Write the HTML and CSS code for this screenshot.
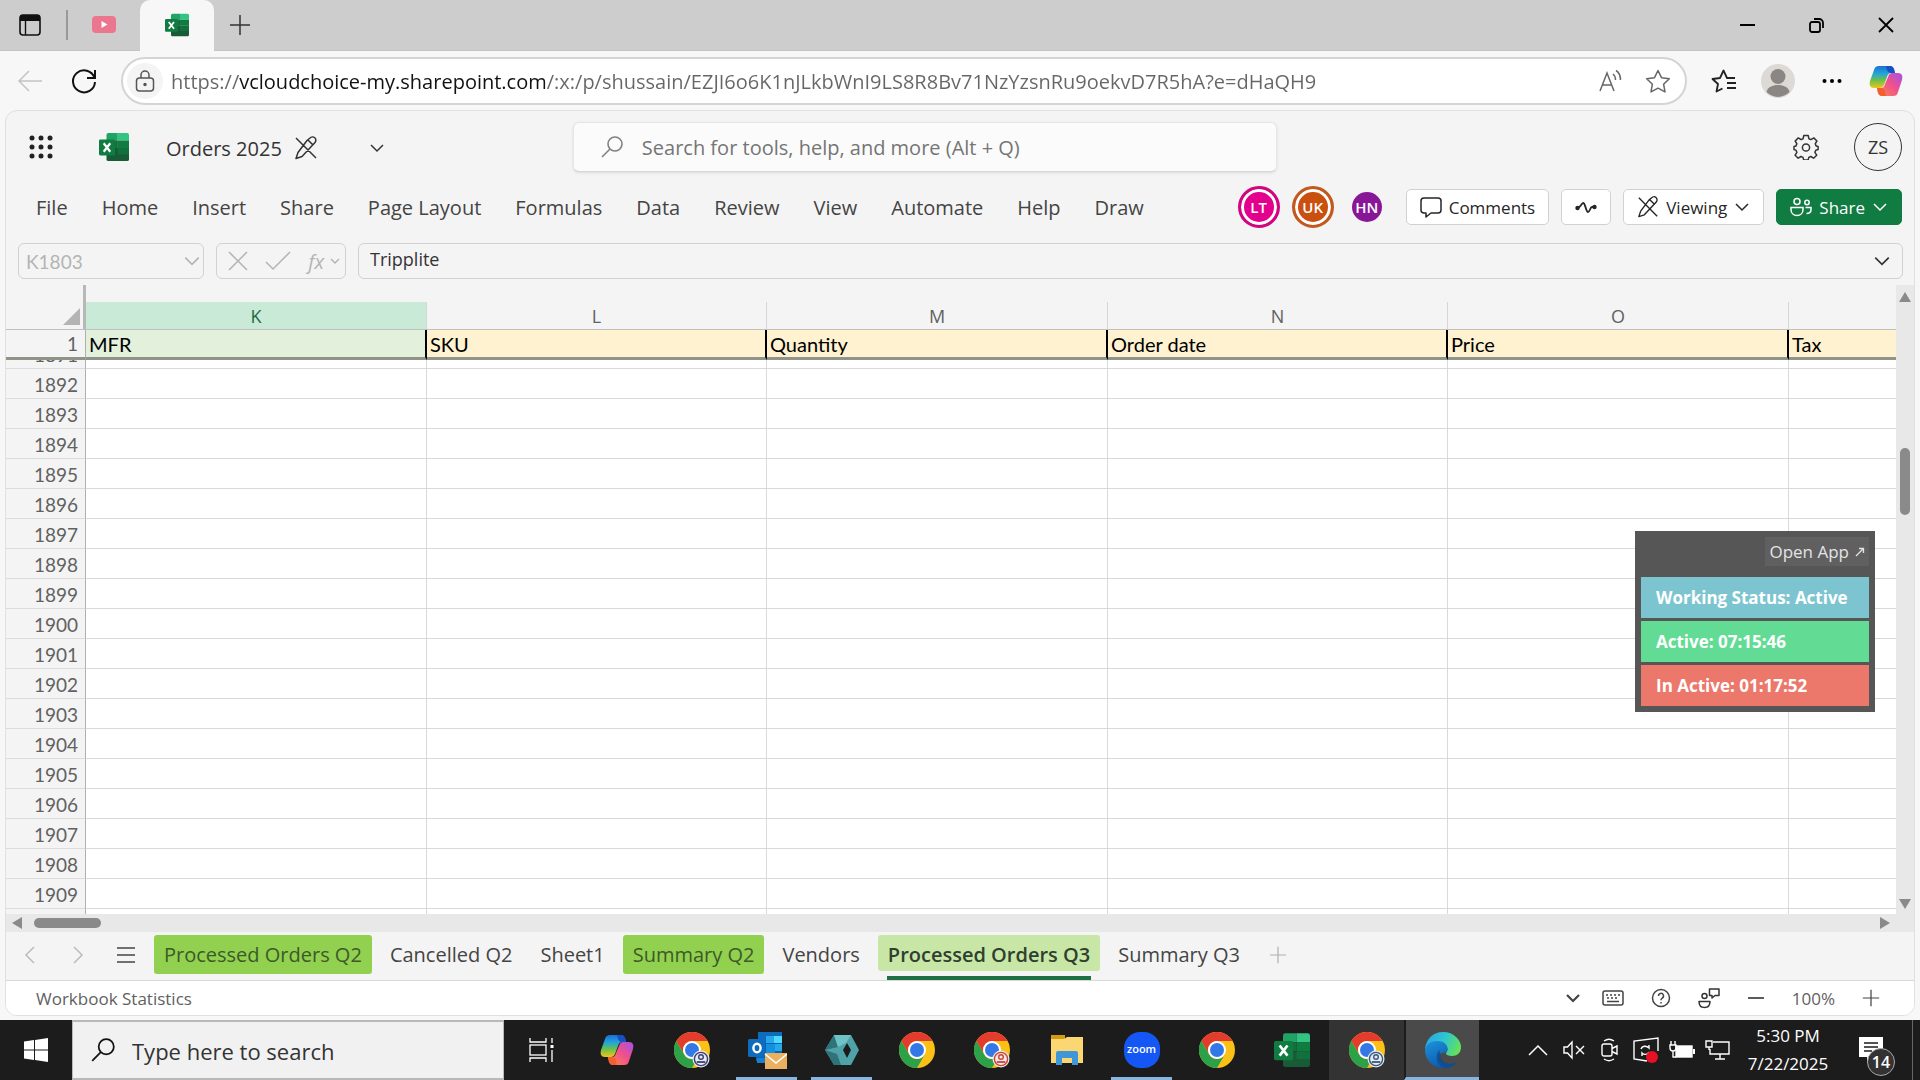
FILE: index.html
```html
<!DOCTYPE html>
<html lang="en">
  <head>
    <meta charset="UTF-8" />
    <meta name="viewport" content="width=device-width, initial-scale=1.0" />
    <title>Orders 2025</title>
    <link rel="stylesheet" href="styles.css" />
  </head>
  <body>
    <!-- Shared icons -->
    <svg class="defs" aria-hidden="true">
      <defs>
        <linearGradient id="cpTop" x1="0" y1="0" x2="0" y2="1">
          <stop offset="0" stop-color="#1b6fd8" />
          <stop offset="0.35" stop-color="#22a6d8" />
          <stop offset="0.65" stop-color="#6cc04a" />
          <stop offset="1" stop-color="#f2c51b" />
        </linearGradient>
        <linearGradient id="cpBottom" x1="1" y1="0" x2="0" y2="1">
          <stop offset="0" stop-color="#a352e8" />
          <stop offset="0.45" stop-color="#ee4f8f" />
          <stop offset="1" stop-color="#ff8a4a" />
        </linearGradient>
        <linearGradient id="edgeTop" x1="0" y1="0.3" x2="1" y2="0.6">
          <stop offset="0" stop-color="#2aa6e0" />
          <stop offset="0.5" stop-color="#2fc6d0" />
          <stop offset="1" stop-color="#66e254" />
        </linearGradient>
        <linearGradient id="edgeBody" x1="0" y1="0" x2="0.6" y2="1">
          <stop offset="0" stop-color="#1d93dd" />
          <stop offset="1" stop-color="#0c56a8" />
        </linearGradient>
        <symbol id="excel" viewBox="0 0 32 32">
          <path fill="#21a366" d="M10 1h10v8H8V3a2 2 0 0 1 2-2z" />
          <path fill="#33c481" d="M20 1h10a2 2 0 0 1 2 2v6H20z" />
          <path fill="#107c41" d="M20 9h12v8H20z" />
          <path fill="#185c37" d="M8 9h12v8H8z" />
          <path fill="#107c41" d="M8 9h12v8H8z" opacity=".6" />
          <path fill="#185c37" d="M8 17h24v12a2 2 0 0 1-2 2H10a2 2 0 0 1-2-2z" />
          <path fill="#107c41" d="M20 17h12v7H20z" opacity=".6" />
          <rect x="0" y="8" width="17" height="17" rx="1.5" fill="#107c41" />
          <path stroke="#fff" stroke-width="2.4" fill="none" d="M5 12l7 9M12 12l-7 9" />
        </symbol>
        <symbol id="chrome" viewBox="0 0 36 36">
          <circle cx="18" cy="18" r="18" fill="#fbc116" />
          <path fill="#e33b2e" d="M2.4 9A18 18 0 0 1 33.6 9H18a9 9 0 0 0-7.8 13.5z" />
          <path fill="#2da04a" d="M2.4 9l7.8 13.5A9 9 0 0 0 25.8 22.5L18 36A18 18 0 0 1 2.4 9z" />
          <circle cx="18" cy="18" r="9" fill="#fff" />
          <circle cx="18" cy="18" r="7" fill="#3478e8" />
        </symbol>
        <symbol id="badge" viewBox="0 0 18 18">
          <circle cx="9" cy="9" r="8.5" fill="#e8eaf0" />
          <circle cx="9" cy="9" r="6.6" fill="none" stroke="currentColor" stroke-width="1.4" />
          <circle cx="9" cy="7" r="2.3" fill="none" stroke="currentColor" stroke-width="1.4" />
          <path d="M4.8 12h8.4" stroke="currentColor" stroke-width="1.8" />
        </symbol>
        <symbol id="copilot" viewBox="0 0 34 32">
          <path fill="url(#cpTop)" d="M10 1h11c2 0 3 1 4 3l1 4h-4c-2 0-3 1-4 4l-3 8c-1 2-2 3-4 3H5c-4 0-5-3-4-7l4-11c1-3 2-4 5-4z" />
          <path fill="#1750c4" d="M17 1h4c2 0 3 1 4 3l1 4h-4c-2 0-3-1-4-3z" />
          <path fill="url(#cpBottom)" d="M24 31H13c-2 0-3-1-4-3l-1-5h4c2 0 3-1 4-4l3-7c1-3 2-4 4-4h6c4 0 5 3 4 7l-4 12c-1 3-2 4-5 4z" />
          <path fill="#f3602f" d="M17 31h-4c-2 0-3-1-4-3l-1-5h4c2 0 3 1 4 3z" />
        </symbol>
        <symbol id="chevron" viewBox="0 0 16 16">
          <path d="M2 5l6 6 6-6" fill="none" stroke="currentColor" stroke-width="1.5" />
        </symbol>
        <symbol id="search" viewBox="0 0 24 24">
          <circle cx="15" cy="9" r="7" fill="none" stroke="currentColor" stroke-width="1.6" />
          <path d="M10 14l-8 8" stroke="currentColor" stroke-width="1.6" />
        </symbol>
        <symbol id="pencil-off" viewBox="0 0 24 24">
          <path d="M13 4.500l3-2.500a3 3 0 0 1 5 4.500L8 20.500 2 22.500l2-6L13 4.500zM14 4l5 5M2 2l20 20" fill="none" stroke="currentColor" stroke-width="1.5" stroke-linejoin="round" />
        </symbol>
        <symbol id="plus" viewBox="0 0 22 22">
          <path d="M11 1v20M1 11h20" stroke="currentColor" stroke-width="1.5" />
        </symbol>
      </defs>
    </svg>

    <header class="tab-strip">
      <button class="strip-btn" aria-label="Tab actions">
        <svg width="22" height="22" viewBox="0 0 22 22">
          <rect x="1" y="1" width="20" height="20" rx="3" fill="none" stroke="#111" stroke-width="1.6" />
          <path d="M1 4a3 3 0 0 1 3-3h14a3 3 0 0 1 3 3v3H1z" fill="#111" />
          <path d="M6.500 7v14" stroke="#111" stroke-width="1.4" />
        </svg>
      </button>
      <span class="strip-divider"></span>
      <button class="tab" aria-label="YouTube">
        <svg width="24" height="18" viewBox="0 0 24 18">
          <rect width="24" height="17" rx="4" fill="#ea7690" />
          <path d="M9.500 5v7l6-3.500z" fill="#fff" />
        </svg>
      </button>
      <button class="tab tab-active" aria-label="Orders 2025">
        <svg width="24" height="24"><use href="#excel" /></svg>
      </button>
      <button class="strip-btn new-tab" aria-label="New tab">
        <svg width="22" height="22"><use href="#plus" /></svg>
      </button>
      <div class="window-controls">
        <button aria-label="Minimize">
          <svg width="16" height="16" viewBox="0 0 16 16"><path d="M0 8h15" stroke="#000" stroke-width="2" /></svg>
        </button>
        <button aria-label="Restore">
          <svg width="16" height="16" viewBox="0 0 16 16" fill="none" stroke="#000" stroke-width="1.800">
            <rect x="1" y="5" width="10" height="10" rx="2" />
            <path d="M5 2h5a4 4 0 0 1 4 4v5" />
          </svg>
        </button>
        <button aria-label="Close">
          <svg width="16" height="16" viewBox="0 0 16 16"><path d="M1 1l14 14M15 1L1 15" stroke="#000" stroke-width="1.800" /></svg>
        </button>
      </div>
    </header>

    <nav class="toolbar">
      <button class="tool-btn" aria-label="Back" disabled>
        <svg width="26" height="22" viewBox="0 0 26 22"><path d="M25 11H2M12 1L2 11l10 10" fill="none" stroke="#c4c4c4" stroke-width="1.500" /></svg>
      </button>
      <button class="tool-btn" aria-label="Refresh">
        <svg width="26" height="26" viewBox="0 0 26 26" fill="none" stroke="#111" stroke-width="2">
          <path d="M23.500 10A11 11 0 1 0 24 14" />
          <path d="M24 2v8h-8" />
        </svg>
      </button>
      <div class="address">
        <button class="site-info" aria-label="Site information">
          <svg width="20" height="22" viewBox="0 0 20 22" fill="none" stroke="#555" stroke-width="1.500">
            <rect x="1.500" y="8" width="17" height="13" rx="3" />
            <path d="M6 8V5a4 4 0 0 1 8 0v3" />
            <circle cx="10" cy="14.500" r="1" fill="#555" />
          </svg>
        </button>
        <input class="url" type="text" aria-label="Address" value="https://vcloudchoice-my.sharepoint.com/:x:/p/shussain/EZJI6o6K1nJLkbWnI9LS8R8Bv71NzYzsnRu9oekvD7R5hA?e=dHaQH9" />
        <button class="address-btn" aria-label="Read aloud">
          <svg width="26" height="24" viewBox="0 0 26 24" fill="none" stroke="#666" stroke-width="1.500">
            <path d="M2 22L9 4l7 18M4.500 16h9" />
            <path d="M15 5c2 1.500 2.500 4 2.500 6M18 1.500c4 2.500 4.500 6 4.500 9.500" />
          </svg>
        </button>
        <button class="address-btn" aria-label="Add to favorites">
          <svg width="26" height="24" viewBox="0 0 26 24"><path d="M13 1.500l3.500 7.200 7.800 1-5.700 5.500 1.400 7.700-7-3.700-7 3.700 1.400-7.700-5.700-5.500 7.800-1z" fill="none" stroke="#666" stroke-width="1.500" stroke-linejoin="round" /></svg>
        </button>
      </div>
      <button class="tool-btn" aria-label="Favorites">
        <svg width="26" height="24" viewBox="0 0 26 24" fill="none" stroke="#222" stroke-width="1.800" stroke-linejoin="round">
          <path d="M24 9h-8L12.500 1.500 9 9l-7.500 1L7 15l-1.500 7.500 6-3" />
          <path d="M16 14h9M16 19h9" />
        </svg>
      </button>
      <button class="tool-btn" aria-label="Profile">
        <svg width="34" height="34" viewBox="0 0 34 34">
          <circle cx="17" cy="17" r="17" fill="#ddd9d5" />
          <circle cx="17" cy="12.500" r="7.500" fill="#8a8683" />
          <path d="M5.500 28c1-5 6-7 11.500-7s10.500 2 11.500 7a16 16 0 0 1-23 0z" fill="#8a8683" />
        </svg>
      </button>
      <button class="tool-btn" aria-label="Settings and more">
        <svg width="20" height="6" viewBox="0 0 20 6"><circle cx="2.500" cy="3" r="2" /><circle cx="10" cy="3" r="2" /><circle cx="17.500" cy="3" r="2" /></svg>
      </button>
      <button class="tool-btn" aria-label="Copilot">
        <svg width="34" height="32"><use href="#copilot" /></svg>
      </button>
    </nav>

    <main class="app">
      <div class="app-header">
        <button class="waffle" aria-label="App launcher">
          <svg width="24" height="24" viewBox="0 0 24 24" fill="#222">
            <circle cx="3" cy="3" r="2.500" /><circle cx="12" cy="3" r="2.500" /><circle cx="21" cy="3" r="2.500" />
            <circle cx="3" cy="12" r="2.500" /><circle cx="12" cy="12" r="2.500" /><circle cx="21" cy="12" r="2.500" />
            <circle cx="3" cy="21" r="2.500" /><circle cx="12" cy="21" r="2.500" /><circle cx="21" cy="21" r="2.500" />
          </svg>
        </button>
        <svg class="app-logo" width="30" height="30"><use href="#excel" /></svg>
        <button class="file-name">
          <span>Orders 2025</span>
          <svg width="24" height="24"><use href="#pencil-off" /></svg>
          <svg class="file-chevron" width="16" height="16"><use href="#chevron" /></svg>
        </button>
        <label class="search-box">
          <svg width="24" height="24"><use href="#search" /></svg>
          <input type="search" aria-label="Search" placeholder="Search for tools, help, and more (Alt + Q)" />
        </label>
        <div class="account">
          <button aria-label="Settings">
            <svg width="26" height="26" viewBox="0 0 26 26" fill="none" stroke="#333" stroke-width="1.500" stroke-linejoin="round">
              <path d="M10.800 1.500h4.400l.7 3.200 2.100.9 2.800-1.700 3.100 3.100-1.700 2.800.9 2.100 0 0 2 .5v3.200l-2.300.6-.9 2.100 1.800 2.900-3.100 3-2.800-1.700-2 .9-.7 2.600h-4.400l-.7-2.600-2-.9-2.800 1.700-3.100-3 1.800-2.900-.9-2.100L1 15.600v-3.200l2-.5.9-2.100L2.200 7l3.100-3.100L8.100 5.600l2-.9z" />
              <circle cx="13" cy="13.500" r="3.600" />
            </svg>
          </button>
          <button class="me">ZS</button>
        </div>
      </div>

      <div class="ribbon">
        <nav class="menu">
          <button>File</button>
          <button>Home</button>
          <button>Insert</button>
          <button>Share</button>
          <button>Page Layout</button>
          <button>Formulas</button>
          <button>Data</button>
          <button>Review</button>
          <button>View</button>
          <button>Automate</button>
          <button>Help</button>
          <button>Draw</button>
        </nav>
        <div class="people">
          <span class="avatar avatar-ring pink">LT</span>
          <span class="avatar avatar-ring orange">UK</span>
          <span class="avatar purple">HN</span>
        </div>
        <div class="ribbon-actions">
          <button class="btn">
            <svg width="22" height="22" viewBox="0 0 22 22"><path d="M4 2h14a3 3 0 0 1 3 3v9a3 3 0 0 1-3 3h-7l-5 4v-4H4a3 3 0 0 1-3-3V5a3 3 0 0 1 3-3z" fill="none" stroke="currentColor" stroke-width="1.500" stroke-linejoin="round" /></svg>
            Comments
          </button>
          <button class="btn" aria-label="Activity">
            <svg width="22" height="18" viewBox="0 0 22 18" fill="none" stroke="currentColor" stroke-width="1.800" stroke-linejoin="round">
              <path d="M3 10c2 0 3-4 5-5s3 9 5 9 2-5 4-5h2" />
              <circle cx="2.500" cy="10" r="1.300" fill="currentColor" /><circle cx="19.500" cy="9" r="1.300" fill="currentColor" />
            </svg>
          </button>
          <button class="btn">
            <svg width="22" height="22"><use href="#pencil-off" /></svg>
            Viewing
            <svg width="16" height="16"><use href="#chevron" /></svg>
          </button>
          <button class="btn btn-share">
            <svg width="22" height="20" viewBox="0 0 22 20" fill="none" stroke="currentColor" stroke-width="1.500">
              <circle cx="7" cy="4.500" r="3" />
              <path d="M1 10.500h12v2c0 3.500-2.500 6-6 6s-6-2.500-6-6z" />
              <circle cx="17" cy="5.500" r="2.200" />
              <path d="M15.500 10.500H21v2c0 2.500-2 4-4.500 4" />
            </svg>
            Share
            <svg width="16" height="16"><use href="#chevron" /></svg>
          </button>
        </div>
      </div>

      <div class="formula-bar">
        <div class="name-box">
          <input type="text" aria-label="Name box" value="K1803" disabled />
          <svg width="18" height="18"><use href="#chevron" /></svg>
        </div>
        <div class="fx-box">
          <button aria-label="Cancel" disabled><svg width="20" height="20" viewBox="0 0 20 20"><path d="M1 1l18 18M19 1L1 19" stroke="currentColor" stroke-width="1.500" /></svg></button>
          <button aria-label="Enter" disabled><svg width="26" height="20" viewBox="0 0 26 20"><path d="M1 11l7 7L25 1" fill="none" stroke="currentColor" stroke-width="1.500" /></svg></button>
          <button class="fx" aria-label="Insert function" disabled><i>fx</i><svg width="10" height="10" viewBox="0 0 10 10"><path d="M1 3l4 4 4-4" fill="none" stroke="currentColor" stroke-width="1.500" /></svg></button>
        </div>
        <div class="formula-input">
          <input type="text" aria-label="Formula" value="Tripplite" readonly />
          <svg width="18" height="18"><use href="#chevron" /></svg>
        </div>
      </div>

      <div class="sheet">
        <div class="grid">
          <table class="frozen">
            <colgroup>
              <col class="c-head" /><col class="c-wide" /><col class="c-norm" /><col class="c-wide" /><col class="c-norm" /><col class="c-wide" /><col />
            </colgroup>
            <thead>
              <tr>
                <th class="corner"><svg width="17" height="17" viewBox="0 0 17 17"><path d="M17 0v17H0z" fill="#b4b4b4" /></svg></th>
                <th class="selected"><div class="letter">K</div></th>
                <th><div class="letter">L</div></th>
                <th><div class="letter">M</div></th>
                <th><div class="letter">N</div></th>
                <th><div class="letter">O</div></th>
                <th></th>
              </tr>
            </thead>
            <tbody>
              <tr>
                <th class="row-num">1</th>
                <td class="selected">MFR</td>
                <td>SKU</td>
                <td>Quantity</td>
                <td>Order date</td>
                <td>Price</td>
                <td>Tax</td>
              </tr>
            </tbody>
          </table>
          <div class="rows" id="rows">
            <table>
              <colgroup>
                <col class="c-head" /><col class="c-wide" /><col class="c-norm" /><col class="c-wide" /><col class="c-norm" /><col class="c-wide" /><col />
              </colgroup>
              <tbody id="rowsBody"></tbody>
            </table>
          </div>
        </div>
        <div class="scroll-y">
          <svg width="12" height="10" viewBox="0 0 12 10"><path d="M6 0l6 10H0z" fill="#8a8a8a" /></svg>
          <span class="thumb-y"></span>
          <svg class="arrow-end" width="12" height="10" viewBox="0 0 12 10"><path d="M0 0h12L6 10z" fill="#8a8a8a" /></svg>
        </div>
      </div>

      <div class="scroll-x">
        <svg width="10" height="12" viewBox="0 0 10 12"><path d="M0 6l10-6v12z" fill="#8a8a8a" /></svg>
        <span class="thumb-x"></span>
        <svg class="arrow-end" width="10" height="12" viewBox="0 0 10 12"><path d="M0 0l10 6-10 6z" fill="#8a8a8a" /></svg>
      </div>

      <div class="sheet-tabs">
        <button class="tab-nav" aria-label="Previous sheet"><svg width="16" height="18" viewBox="0 0 16 18"><path d="M12 1L4 9l8 8" fill="none" stroke="#bbb" stroke-width="1.500" /></svg></button>
        <button class="tab-nav" aria-label="Next sheet"><svg width="16" height="18" viewBox="0 0 16 18"><path d="M4 1l8 8-8 8" fill="none" stroke="#bbb" stroke-width="1.500" /></svg></button>
        <button class="tab-nav" aria-label="All sheets"><svg width="18" height="16" viewBox="0 0 18 16"><path d="M0 1h18M0 8h18M0 15h18" stroke="#444" stroke-width="1.500" /></svg></button>
        <button class="sheet-tab green">Processed Orders Q2</button>
        <button class="sheet-tab">Cancelled Q2</button>
        <button class="sheet-tab">Sheet1</button>
        <button class="sheet-tab green">Summary Q2</button>
        <button class="sheet-tab">Vendors</button>
        <button class="sheet-tab current">Processed Orders Q3</button>
        <button class="sheet-tab">Summary Q3</button>
        <button class="add-sheet" aria-label="New sheet"><svg width="18" height="18"><use href="#plus" /></svg></button>
      </div>

      <footer class="status-bar">
        <span>Workbook Statistics</span>
        <div class="status-tools">
          <button class="status-more" aria-label="More"><svg width="16" height="16" viewBox="0 0 16 16"><path d="M2 5l6 6 6-6" fill="none" stroke="currentColor" stroke-width="2.200" /></svg></button>
          <button aria-label="Keyboard shortcuts">
            <svg width="22" height="18" viewBox="0 0 22 18" fill="none" stroke="#444" stroke-width="1.500">
              <rect x="1" y="2" width="20" height="14" rx="2" />
              <path d="M4 6h2M8 6h2M12 6h2M16 6h2M5 9h2M9 9h2M13 9h2M5 12.500h12" />
            </svg>
          </button>
          <button aria-label="Help">
            <svg width="20" height="20" viewBox="0 0 20 20" fill="none" stroke="#444" stroke-width="1.500">
              <circle cx="10" cy="10" r="8.500" />
              <path d="M7.500 8a2.500 2.500 0 1 1 3.800 2c-1 .7-1.300 1-1.300 2.200M10 14v1.500" />
            </svg>
          </button>
          <button aria-label="Feedback">
            <svg width="22" height="22" viewBox="0 0 22 22" fill="none" stroke="#333" stroke-width="1.500" stroke-linejoin="round">
              <circle cx="6.500" cy="9" r="2.500" />
              <path d="M1 14.500h11c0 4-2 6-5.500 6s-5.500-2-5.500-6z" />
              <path d="M11.500 2h9.500v6.500h-4l-3 2.500v-2.500h-2.500z" />
            </svg>
          </button>
          <button aria-label="Zoom out"><svg width="18" height="18" viewBox="0 0 18 18"><path d="M1 9h16" stroke="#333" stroke-width="1.600" /></svg></button>
          <span class="zoom-level">100%</span>
          <button aria-label="Zoom in"><svg width="18" height="18"><use href="#plus" /></svg></button>
        </div>
      </footer>
    </main>

    <!-- Time tracker floating over the sheet -->
    <aside class="tracker">
      <button class="open-app">Open App <svg width="10" height="10" viewBox="0 0 10 10"><path d="M1 9l7-7M4 1.500h4.500V6" fill="none" stroke="currentColor" stroke-width="1.300" /></svg></button>
      <div class="tracker-row status">Working Status: Active</div>
      <div class="tracker-row active">Active: 07:15:46</div>
      <div class="tracker-row inactive">In Active: 01:17:52</div>
    </aside>

    <footer class="taskbar">
      <button class="start" aria-label="Start">
        <svg width="24" height="24" viewBox="0 0 24 24" fill="#fff"><path d="M0 3.500l10-1.400v9.400H0zM11 2l13-2v11.500H11zM0 12.500h10v9.400L0 20.500zM11 12.500h13V24l-13-2z" /></svg>
      </button>
      <label class="task-search">
        <svg width="26" height="26"><use href="#search" /></svg>
        <input type="search" aria-label="Windows search" placeholder="Type here to search" />
      </label>
      <button class="task" aria-label="Task view">
        <svg width="26" height="26" viewBox="0 0 26 26" fill="none" stroke="#fff" stroke-width="1.300">
          <path d="M1 1v4h16V1M1 25v-4h16v4" />
          <rect x="1" y="8" width="16" height="10" />
          <path d="M23 1v5M23 13v12" /><path d="M21.500 9.500h3" stroke-width="3" />
        </svg>
      </button>
      <button class="task" aria-label="Copilot"><svg width="34" height="32"><use href="#copilot" /></svg></button>
      <button class="task" aria-label="Chrome work profile">
        <svg width="36" height="36" viewBox="0 0 36 36"><use href="#chrome" width="36" height="36" /><use href="#badge" x="18" y="18" width="18" height="18" color="#3c3f73" /></svg>
      </button>
      <button class="task running" aria-label="Outlook">
        <svg width="40" height="38" viewBox="0 0 40 38">
          <path fill="#0f6cbd" d="M11 1h24v11H11z" /><path fill="#28a8ea" d="M19 5h8v8h-8z" /><path fill="#50d9ff" d="M27 5h8v8h-8z" />
          <path fill="#0364b8" d="M9 12h26v18H9z" /><path fill="#1490df" d="M19 13h9v10h-9z" /><path fill="#28a8ea" d="M28 13h7v7h-7z" /><path fill="#1a7fd0" d="M10 27h16v5H10z" />
          <rect x="1" y="8" width="17" height="18" rx="1.500" fill="#0f6cbd" />
          <ellipse cx="10" cy="17" rx="3.600" ry="4.300" fill="none" stroke="#fff" stroke-width="2.400" />
          <path fill="#e9b062" d="M18 22h22v16H18z" /><path d="M18 23l11 9 11-9" fill="none" stroke="#fff" stroke-width="1.500" />
        </svg>
      </button>
      <button class="task running" aria-label="Tracker">
        <svg width="34" height="30" viewBox="0 0 34 30">
          <path fill="#4fa3a8" d="M9 0h17l8 15-8 15H9L0 15z" />
          <path fill="#2f7277" d="M0 15l12 4 4 11H9zM9 0l4 12L0 15z" />
          <path fill="#6fc3c7" d="M13 12L9 0h17l-5 8z" />
          <path fill="#1b1b1b" d="M22 8l4 7-4 8-4-8z" />
        </svg>
      </button>
      <button class="task" aria-label="Chrome"><svg width="36" height="36"><use href="#chrome" /></svg></button>
      <button class="task" aria-label="Chrome personal profile">
        <svg width="36" height="36" viewBox="0 0 36 36"><use href="#chrome" width="36" height="36" /><use href="#badge" x="18" y="18" width="18" height="18" color="#d0432b" /></svg>
      </button>
      <button class="task" aria-label="File Explorer">
        <svg width="32" height="32" viewBox="0 0 32 32">
          <path fill="#d69a10" d="M0 1h14v5H0z" /><path fill="#fbd774" d="M0 5h13l3-2h16v26H0z" />
          <path fill="#3f97d8" d="M7 17h18a2 2 0 0 1 2 2v12h-6v-7H11v7H5V19a2 2 0 0 1 2-2z" />
        </svg>
      </button>
      <button class="task running" aria-label="Zoom"><span class="zoom-logo">zoom</span></button>
      <button class="task" aria-label="Chrome second window"><svg width="36" height="36"><use href="#chrome" /></svg></button>
      <button class="task" aria-label="Excel"><svg width="36" height="36"><use href="#excel" /></svg></button>
      <button class="task open" aria-label="Chrome profile window">
        <svg width="36" height="36" viewBox="0 0 36 36"><use href="#chrome" width="36" height="36" /><use href="#badge" x="18" y="18" width="18" height="18" color="#36597c" /></svg>
      </button>
      <button class="task focused" aria-label="Edge">
        <svg width="36" height="36" viewBox="0 0 36 36">
          <path fill="url(#edgeTop)" d="M0 17C1 7 8 0 18 0c11 0 18 8 18 15 0 6-4 9-9 9-3 0-6-1-6-2.500 0-1 1.500-1.500 1.500-4.500 0-4-4-6.500-9-6.500-6 0-10 3-13.500 6.500z" />
          <path fill="url(#edgeBody)" d="M0 18C1 12 6 9 12.500 9c6 0 10 3.500 10 8 0 2-1.200 3-2 4-6-1-8 3-6 7 2 4 8 6 13 4 2-.8 3.500-2 4.500-2-3 4-8 6-14 6C8 36 0 28 0 18z" />
          <path fill="#0a4a94" d="M14 18c-5 7-2 16 6 18 5 0 9-2 12.500-6-6 3-13 2-16-3-2-4-1-7-2.500-9z" opacity=".7" />
        </svg>
      </button>

      <div class="tray">
        <button aria-label="Show hidden icons"><svg width="20" height="12" viewBox="0 0 20 12"><path d="M1 11l9-9 9 9" fill="none" stroke="#fff" stroke-width="1.500" /></svg></button>
        <button aria-label="Volume muted">
          <svg width="22" height="20" viewBox="0 0 22 20" fill="none" stroke="#fff" stroke-width="1.400"><path d="M1 7h3.500L9 2v16l-4.500-5H1zM13 6l8 8M21 6l-8 8" /></svg>
        </button>
        <button aria-label="Meet now">
          <svg width="18" height="24" viewBox="0 0 18 24" fill="none" stroke="#fff" stroke-width="1.400"><rect x="1" y="6" width="10" height="12" rx="2" /><path d="M11 10.500l5-2.500v8l-5-2.500M3 3c3-2 7-2 10 0M3 21c3 2 7 2 10 0" /></svg>
        </button>
        <button aria-label="Updates">
          <svg width="26" height="26" viewBox="0 0 26 26" fill="none" stroke="#fff" stroke-width="1.400"><path d="M25 14V1L1 4v18l13 2M8 12c1-3 5-4 8-1V8M16 15c-1 3-5 3-7 1v3" /><circle cx="19" cy="20" r="6" fill="#e81123" stroke="none" /></svg>
        </button>
        <button aria-label="Battery">
          <svg width="26" height="20" viewBox="0 0 26 20" fill="none" stroke="#fff" stroke-width="1.400"><path d="M2 1v4M6 1v4M1 5h6v3c0 2-1 3-3 3s-3-1-3-3zM4 11v6h3" /><rect x="7" y="6" width="16" height="11" fill="#fff" /><path d="M25 9v5" stroke-width="2" /></svg>
        </button>
        <button aria-label="Network">
          <svg width="26" height="22" viewBox="0 0 26 22" fill="none" stroke="#fff" stroke-width="1.400"><path d="M8 3h16v12H5V10M10 20h10M15 15v5M1 2h6v6H1zM4 8v3" /></svg>
        </button>
      </div>
      <button class="clock"><span>5:30 PM</span><span>7/22/2025</span></button>
      <button class="notify" aria-label="Notifications">
        <svg width="24" height="26" viewBox="0 0 24 26"><path d="M0 0h24v20H12l-4 5v-5H0z" fill="#fff" /><path d="M5 6h14M5 10h14M5 14h8" stroke="#1c1c1c" stroke-width="1.400" /></svg>
        <span class="count">14</span>
      </button>
    </footer>

    <script>
      // Fill the visible part of the sheet with empty rows
      const body = document.getElementById("rowsBody");
      for (let n = 1891; n <= 1910; n++) {
        const tr = document.createElement("tr");
        tr.innerHTML = `<th class="row-num">${n}</th>` + "<td></td>".repeat(6);
        body.appendChild(tr);
      }
      document.getElementById("rows").scrollTop = 21;
    </script>
  </body>
</html>
```
FILE: styles.css
```css
* {
  box-sizing: border-box;
}

body {
  margin: 0;
  height: 100vh;
  display: flex;
  flex-direction: column;
  overflow: hidden;
  background-color: #f7f7f7;
  font-family: "Open Sans", "Noto Sans", sans-serif;
  font-size: 17px;
  color: #333;
}

button,
input {
  font-family: inherit;
  font-size: inherit;
  color: inherit;
  background: none;
  border: none;
  padding: 0;
  margin: 0;
  min-width: 0;
}

button {
  display: flex;
  align-items: center;
  justify-content: center;
  white-space: nowrap;
}

svg {
  flex: none;
}

.defs {
  position: absolute;
  width: 0;
  height: 0;
}

/* Browser tabs */
.tab-strip {
  display: flex;
  align-items: center;
  height: 51px;
  background-color: #cdcdcd;
  border-bottom: 1px solid #c4c4c4;
}

.strip-btn {
  width: 60px;
  height: 48px;
}

.strip-divider {
  width: 2px;
  height: 30px;
  margin-left: 6px;
  background-color: #999;
}

.tab {
  width: 72px;
  height: 51px;
}

.tab-active {
  width: 74px;
  background-color: #f7f7f7;
  border-radius: 10px 10px 0 0;
}

.new-tab {
  width: 52px;
}

.window-controls {
  display: flex;
  margin-left: auto;
}

.window-controls button {
  width: 69px;
  height: 50px;
}

/* Address row */
.toolbar {
  display: flex;
  align-items: center;
  height: 59px;
  padding: 0 7px 0 3px;
}

.tool-btn {
  width: 54px;
  height: 48px;
}

.address {
  flex: 1;
  display: flex;
  align-items: center;
  height: 48px;
  margin: 0 10px;
  padding: 0 4px;
  background-color: #fff;
  border: 2px solid #d4d4d4;
  border-radius: 24px;
}

.site-info {
  width: 36px;
  height: 36px;
  border-radius: 18px;
  background-color: #f4f4f4;
}

.url {
  flex: 1;
  padding: 2px 0 0 8px;
  font-size: 20px;
  /* darker host name between the greyed-out scheme and path */
  background: linear-gradient(to right, #666 76px, #111 76px, #111 382px, #666 382px);
  background-clip: text;
  -webkit-text-fill-color: transparent;
}

.address-btn {
  width: 47px;
  height: 40px;
}

/* Excel frame */
.app {
  flex: 1;
  min-height: 0;
  display: flex;
  flex-direction: column;
  margin: 0 5px 4px;
  border: 1px solid #e0e0e0;
  border-radius: 12px;
  overflow: hidden;
  background-color: #f4f4f4;
}

.app-header {
  display: flex;
  align-items: center;
  height: 72px;
  padding: 0 12px 0 23px;
}

.waffle {
  width: 24px;
  height: 40px;
}

.app-logo {
  margin: 0 37px 0 46px;
}

.file-name {
  padding-top: 2px;
  font-size: 20px;
  gap: 12px;
}

.file-chevron {
  margin-left: 39px;
}

.search-box {
  display: flex;
  align-items: center;
  width: 704px;
  height: 50px;
  margin-left: 188px;
  padding: 0 26px;
  gap: 18px;
  border: 1px solid #e6e6e6;
  border-bottom-color: #d6d6d6;
  border-radius: 6px;
  background-color: #fbfbfb;
  box-shadow: 0 1px 3px rgba(0, 0, 0, 0.1);
  color: #808080;
}

.search-box input {
  flex: 1;
  font-size: 20px;
}

input::placeholder {
  color: #757575;
  opacity: 1;
}

.account {
  display: flex;
  align-items: center;
  gap: 35px;
  margin-left: auto;
}

.me {
  width: 48px;
  height: 48px;
  border: 1px solid #333;
  border-radius: 50%;
  font-size: 18px;
}

.ribbon {
  display: flex;
  align-items: center;
  height: 48px;
  padding: 0 12px 0 30px;
}

.menu {
  display: flex;
  gap: 34px;
}

.menu button {
  font-size: 20px;
  color: #444;
}

.people {
  display: flex;
  align-items: center;
  gap: 12px;
  margin-left: auto;
}

.avatar {
  display: flex;
  align-items: center;
  justify-content: center;
  width: 30px;
  height: 30px;
  border-radius: 50%;
  color: #fff;
  font-size: 15px;
  font-weight: 600;
}

.avatar-ring {
  width: 42px;
  height: 42px;
  border: 3px solid;
  box-shadow: inset 0 0 0 3px #fff;
}

.avatar-ring + .purple {
  margin-left: 6px;
}

.pink {
  background-color: #e3008c;
  border-color: #d1067e;
}

.orange {
  background-color: #ca5010;
  border-color: #c25a20;
}

.purple {
  background-color: #881798;
}

.ribbon-actions {
  display: flex;
  gap: 12px;
  margin-left: 24px;
}

.btn {
  height: 36px;
  padding: 0 13px;
  gap: 7px;
  border: 1px solid #d1d1d1;
  border-radius: 5px;
  background-color: #fff;
  color: #262626;
}

.btn-share {
  background-color: #107c41;
  border-color: #107c41;
  color: #fff;
}

.formula-bar {
  display: flex;
  gap: 12px;
  padding: 12px 11px 6px 12px;
}

.name-box,
.fx-box,
.formula-input {
  display: flex;
  align-items: center;
  height: 36px;
  border: 1px solid #d1d1d1;
  border-radius: 6px;
}

.name-box {
  width: 186px;
  padding: 0 2px 0 7px;
  color: #b4b4b4;
}

.name-box input {
  flex: 1;
  font-family: Lato, sans-serif;
  font-size: 19px;
}

.fx-box {
  width: 130px;
  justify-content: space-between;
  padding: 0 5px 0 11px;
}

.fx-box button {
  color: #b4b4b4;
}

.fx {
  gap: 6px;
  font-size: 20px;
}

.formula-input {
  flex: 1;
  padding: 0 11px;
}

.formula-input input {
  flex: 1;
  padding-bottom: 4px;
  font-size: 18px;
}

/* Sheet */
.sheet {
  flex: 1;
  min-height: 0;
  display: flex;
}

.grid {
  flex: 1;
  display: flex;
  flex-direction: column;
  min-width: 0;
}

table {
  width: 100%;
  table-layout: fixed;
  border-collapse: separate;
  border-spacing: 0;
  font-family: Lato, sans-serif;
  font-size: 19px;
}

.c-head {
  width: 80px;
}

.c-wide {
  width: 341px;
}

.c-norm {
  width: 340px;
}

th,
td {
  padding: 0;
  font-weight: normal;
}

thead th {
  height: 45px;
  vertical-align: bottom;
  border-bottom: 1px solid #c0c0c0;
  color: #616161;
  font-family: "Open Sans", sans-serif;
  font-size: 18px;
}

.corner {
  text-align: right;
  padding: 0 3px 4px 0;
  border-right: 3px solid #b8b8b8;
  line-height: 0;
}

.letter {
  height: 27px;
  line-height: 28px;
  border-right: 1px solid #d6d6d6;
}

.selected .letter {
  background-color: #caead8;
  color: #1c6b43;
}

.frozen td {
  height: 30px;
  padding: 1px 0 0 3px;
  font-size: 20px;
  line-height: 26px;
  color: #000;
  background-color: #fff2d0;
  border-right: 2px solid #000;
  border-bottom: 3px solid #8f9388;
}

.frozen td:last-child {
  border-right: none;
}

.frozen td.selected {
  background-color: #e2f0dc;
}

.row-num {
  height: 30px;
  padding: 2px 7px 0 0;
  line-height: 26px;
  text-align: right;
  color: #616161;
  background-color: #f4f4f4;
  border-right: 1px solid #b0b0b0;
  border-bottom: 1px solid #dcdcdc;
}

.frozen .row-num {
  padding-top: 1px;
  border-bottom: 3px solid #8f9388;
}

.rows {
  flex: 1;
  overflow: hidden;
  background-color: #fff;
}

.rows td {
  border-right: 1px solid #d9d9d9;
  border-bottom: 1px solid #d9d9d9;
}

.rows td:last-child {
  border-right: none;
}

.scroll-y {
  display: flex;
  flex-direction: column;
  align-items: center;
  width: 18px;
  padding: 7px 0 5px;
  background-color: #e8e8e8;
}

.thumb-y {
  width: 10px;
  height: 67px;
  margin-top: 146px;
  border-radius: 5px;
  background-color: #8a8a8a;
}

.scroll-y .arrow-end {
  margin-top: auto;
}

.scroll-x {
  display: flex;
  align-items: center;
  height: 18px;
  padding: 0 24px 0 6px;
  background-color: #e8e8e8;
}

.thumb-x {
  width: 67px;
  height: 10px;
  margin-left: 12px;
  border-radius: 5px;
  background-color: #8a8a8a;
}

.scroll-x .arrow-end {
  margin-left: auto;
}

.sheet-tabs {
  display: flex;
  align-items: flex-start;
  gap: 8px;
  height: 48px;
  padding: 3px 0 0 4px;
}

.tab-nav {
  width: 40px;
  height: 39px;
}

.sheet-tab {
  height: 39px;
  padding: 0 10px;
  font-size: 20px;
  border-radius: 3px;
  color: #444;
}

.green {
  background-color: #92d050;
  color: #3c5a28;
}

.current {
  position: relative;
  height: 36px;
  padding-top: 3px;
  background-color: #c8e7a7;
  font-weight: 600;
  color: #2f4030;
}

.current::after {
  content: "";
  position: absolute;
  left: 9px;
  right: 9px;
  bottom: -9px;
  height: 4px;
  background-color: #1e6f42;
}

.add-sheet {
  width: 40px;
  height: 39px;
  color: #b0b0b0;
}

.status-bar {
  display: flex;
  align-items: center;
  justify-content: space-between;
  height: 35px;
  padding: 0 34px 0 30px;
  border-top: 1px solid #d8d8d8;
  background-color: #fff;
  color: #616161;
}

.status-tools {
  display: flex;
  align-items: center;
  gap: 27px;
  color: #444;
}

.status-more {
  margin-right: -6px;
}

.zoom-level {
  color: #616161;
}

/* Floating tracker */
.tracker {
  position: absolute;
  top: 531px;
  right: 45px;
  width: 240px;
  display: flex;
  flex-direction: column;
  gap: 3px;
  padding: 6px;
  background-color: #565656;
  color: #fff;
}

.open-app {
  align-self: flex-end;
  height: 29px;
  margin-bottom: 8px;
  padding: 0 4px;
  gap: 6px;
  background-color: #606060;
  color: #e4e4e4;
}

.tracker-row {
  height: 41px;
  padding-left: 15px;
  line-height: 42px;
  font-weight: 700;
}

.status {
  background-color: #7cc5d0;
}

.active {
  background-color: #62dc95;
}

.inactive {
  background-color: #ec776b;
}

/* Taskbar */
.taskbar {
  display: flex;
  height: 60px;
  background-color: #1c1c1c;
  color: #fff;
}

.start {
  width: 72px;
}

.task-search {
  display: flex;
  align-items: center;
  width: 432px;
  padding-left: 17px;
  gap: 16px;
  border: 1px solid #b8b8b8;
  border-width: 2px 1px;
  background-color: #f1f1f1;
  color: #111;
}

.task-search input {
  flex: 1;
  padding-top: 2px;
  font-size: 22px;
}

.task-search input::placeholder {
  color: #333;
}

.task {
  width: 75px;
}

.running {
  background: linear-gradient(#85b6e2, #85b6e2) center bottom / 61px 3px no-repeat;
}

.open {
  background-color: #333;
}

.focused {
  background-color: #4a4a4a;
  border-bottom: 3px solid #85b6e2;
  border-left: 2px solid #1c1c1c;
  padding-top: 3px;
}

.zoom-logo {
  display: block;
  width: 36px;
  height: 36px;
  border-radius: 16px;
  background-color: #1557f5;
  color: #fff;
  font-size: 11px;
  font-weight: 600;
  line-height: 34px;
}

.tray {
  display: flex;
  align-items: center;
  gap: 14px;
  margin-left: auto;
}

.tray button {
  width: 22px;
  height: 40px;
}

.clock {
  flex-direction: column;
  width: 84px;
  margin-left: 17px;
  line-height: 28px;
}

.notify {
  position: relative;
  width: 83px;
  margin-right: 7px;
  border-right: 1px solid #666;
}

.count {
  position: absolute;
  left: 37px;
  top: 28px;
  width: 28px;
  height: 28px;
  border: 1px solid #aaa;
  border-radius: 50%;
  background-color: #333;
  font-size: 16px;
  font-weight: 600;
  line-height: 26px;
}
```
